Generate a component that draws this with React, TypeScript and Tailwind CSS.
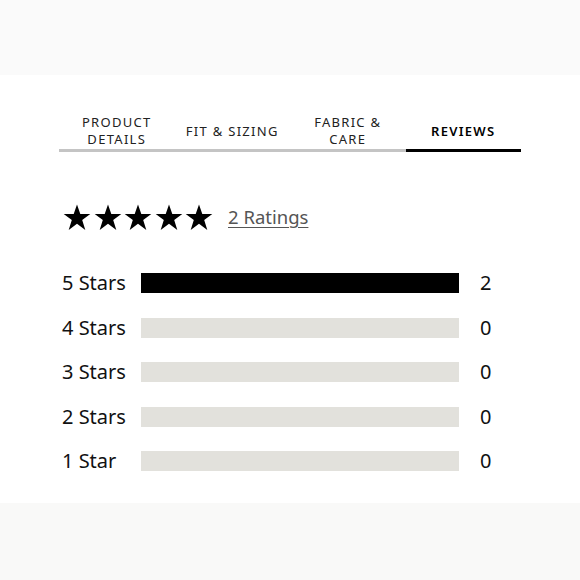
const tabs = [
  { label: ['PRODUCT', 'DETAILS'], active: false },
  { label: ['FIT & SIZING'], active: false },
  { label: ['FABRIC &', 'CARE'], active: false },
  { label: ['REVIEWS'], active: true },
]

const rows = [
  { label: '5 Stars', count: 2 },
  { label: '4 Stars', count: 0 },
  { label: '3 Stars', count: 0 },
  { label: '2 Stars', count: 0 },
  { label: '1 Star', count: 0 },
]

const total = 2

function StarIcon() {
  return (
    <svg width="28" height="27" viewBox="0 0 28 27" className="block">
      <polygon
        points="14,0.5 17.3,10 27.3,10 19.2,16 22.3,26 14,19.8 5.7,26 8.8,16 0.7,10 10.7,10"
        fill="#000"
      />
    </svg>
  )
}

export default function App() {
  return (
    <div className="w-[580px] h-[580px] bg-white flex flex-col font-['Noto_Sans',sans-serif] text-[#111]">
      {/* top band */}
      <div className="h-[75px] bg-[#fafafa]" />

      <div className="flex-1 px-[59px]">
        {/* Tabs */}
        <div className="grid grid-cols-4 mt-[38px]">
          {tabs.map((tab) => (
            <div
              key={tab.label.join(' ')}
              className={`h-[39px] flex flex-col items-center justify-center text-center text-[13px] leading-[17px] tracking-[0.1em] border-b-[3px] ${
                tab.active ? 'border-black font-semibold text-black' : 'border-[#c4c4c4] text-[#222]'
              }`}
            >
              {tab.label.map((line) => (
                <span key={line}>{line}</span>
              ))}
            </div>
          ))}
        </div>

        {/* Summary */}
        <div className="flex items-center mt-[50px] ml-[4px] h-[30px]">
          <div className="flex gap-[2.5px]">
            {[0, 1, 2, 3, 4].map((i) => (
              <StarIcon key={i} />
            ))}
          </div>
          <span className="ml-[15px] text-[18.5px] text-[#555] underline underline-offset-[3px] decoration-1">
            2 Ratings
          </span>
        </div>

        {/* Histogram */}
        <div className="flex flex-col gap-[24.5px] mt-[41px]">
          {rows.map((row) => (
            <div key={row.label} className="flex items-center h-[20px]">
              <span className="w-[82px] pl-[3px] text-[20px] text-[#111]">{row.label}</span>
              <div className="w-[318px] h-[20px] bg-[#e2e1dc]">
                <div
                  className="h-full bg-black"
                  style={{ width: `${(row.count / total) * 100}%` }}
                />
              </div>
              <span className="ml-[21px] text-[20px] text-[#111]">{row.count}</span>
            </div>
          ))}
        </div>
      </div>

      {/* bottom band */}
      <div className="h-[77px] bg-[#f9f9f8]" />
    </div>
  )
}
